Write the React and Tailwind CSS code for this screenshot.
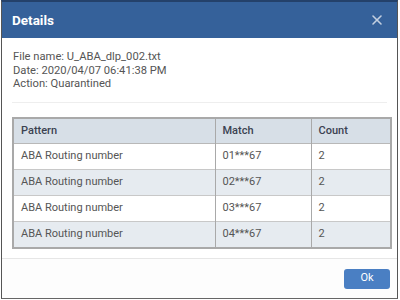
import { X } from "lucide-react";

const rows = [
  { pattern: "ABA Routing number", match: "01***67", count: "2" },
  { pattern: "ABA Routing number", match: "02***67", count: "2" },
  { pattern: "ABA Routing number", match: "03***67", count: "2" },
  { pattern: "ABA Routing number", match: "04***67", count: "2" },
];

const App = () => {
  return (
    <div className="w-[400px] h-[300px] bg-white overflow-hidden font-['Roboto',sans-serif]">
      <div className="ml-[1px] w-[397px] h-[299px] flex flex-col border-x border-b border-x-[#555] border-b-[#666] border-t-2 border-t-[#24416a] bg-white">
        {/* header */}
        <div className="h-[36px] bg-[#35619a] flex items-center justify-between pl-[10px] pr-[12px]">
          <h2 className="text-white font-bold text-[13.5px]">Details</h2>
          <X size={16} strokeWidth={2.4} className="text-[#c3cfe0]" />
        </div>

        {/* body */}
        <div className="px-[10px] pt-[12px] flex-1">
          <div className="text-[11.2px] leading-[13.5px] text-[#555] pl-[1px]">
            <p>File name: U_ABA_dlp_002.txt</p>
            <p>Date: 2020/04/07 06:41:38 PM</p>
            <p>Action: Quarantined</p>
          </div>
          <div className="mt-[11px] border-t border-[#eeeeee]" />

          <table className="mt-[14px] w-[378px] border-2 border-[#a9a9a9] border-collapse text-[11px] text-[#555] table-fixed">
            <colgroup>
              <col className="w-[202px]" />
              <col className="w-[96px]" />
              <col className="w-[80px]" />
            </colgroup>
            <thead>
              <tr className="h-[26px] bg-[#d7dfe7] border-b border-[#b8b8b8]">
                <th className="text-left font-medium text-[#3b4251] px-[7px] border-r border-[#a9a9a9]">Pattern</th>
                <th className="text-left font-medium text-[#3b4251] px-[7px] border-r border-[#a9a9a9]">Match</th>
                <th className="text-left font-medium text-[#3b4251] px-[7px]">Count</th>
              </tr>
            </thead>
            <tbody>
              {rows.map((r, i) => (
                <tr
                  key={i}
                  className={`h-[26px] border-b border-[#c8c8c8] ${i % 2 ? "bg-[#e6ebf0]" : "bg-white"}`}
                >
                  <td className="px-[7px] border-r border-[#a9a9a9]">{r.pattern}</td>
                  <td className="px-[7px] border-r border-[#a9a9a9]">{r.match}</td>
                  <td className="px-[7px]">{r.count}</td>
                </tr>
              ))}
            </tbody>
          </table>
        </div>

        {/* footer */}
        <div className="border-t border-[#e6e6e6] h-[40px] flex items-center justify-end pr-[7px] bg-[#fdfdfd]">
          <button className="w-[46px] h-[20px] rounded-[3px] bg-[#4a7fc3] text-white text-[11px]">
            Ok
          </button>
        </div>
      </div>
    </div>
  );
};

export default App;
